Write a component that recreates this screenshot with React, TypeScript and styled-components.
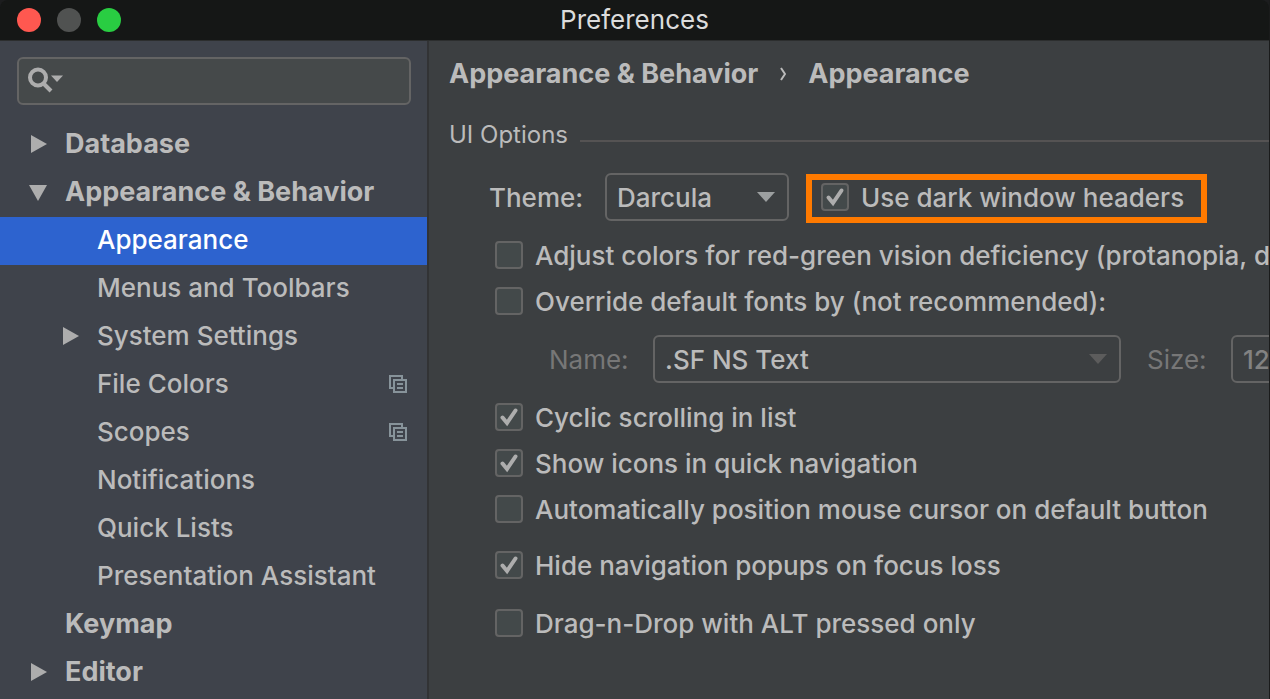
import React from "react";
import styled, { createGlobalStyle, css } from "styled-components";

const color = {
  header: "#151716",
  headerLine: "#2c2e2e",
  sidebar: "#3f434b",
  panel: "#3c3f41",
  field: "#45494a",
  line: "#646464",
  rule: "#555353",
  divider: "#323335",
  text: "#bbbbbb",
  dim: "#777777",
  icon: "#adadad",
  selected: "#2d63cf",
  highlight: "#ff7a00",
};

const GlobalStyle = createGlobalStyle`
  *, *::before, *::after { box-sizing: border-box; }
  html, body, #root { height: 100%; }
  body {
    margin: 0;
    overflow: hidden;
    background: #1c1d1e;
    color: ${color.text};
    font: 450 26px/32px Inter, "Liberation Sans", sans-serif;
  }
  button, input, select { font: inherit; color: inherit; }
`;

const Window = styled.div`
  display: flex;
  flex-direction: column;
  height: 100%;
  overflow: hidden;
  border-right: 1px solid #1a1b1b;
`;

const Header = styled.header`
  flex: none;
  display: grid;
  grid-template-columns: 1fr auto 1fr;
  align-items: center;
  height: 41px;
  padding: 0 17px;
  background: ${color.header};
  border-bottom: 1px solid ${color.headerLine};
  border-radius: 8px 8px 0 0;
`;

const Lights = styled.div`
  display: flex;
  gap: 16px;
`;

const Light = styled.button<{ $fill: string }>`
  width: 24px;
  height: 24px;
  padding: 0;
  border: 0;
  border-radius: 50%;
  background: ${(p) => p.$fill};
`;

const Title = styled.h1`
  margin: 0;
  color: #dcdcdc;
  font-size: 26px;
  font-weight: 400;
`;

const Body = styled.div`
  flex: 1;
  display: flex;
  min-height: 0;
`;

const Sidebar = styled.aside`
  flex: none;
  width: 429px;
  padding-top: 16px;
  overflow: hidden;
  background: ${color.sidebar};
  border-right: 2px solid ${color.divider};
`;

const SearchBox = styled.label`
  display: flex;
  align-items: center;
  gap: 8px;
  height: 48px;
  margin: 0 16px 16px 17px;
  padding: 0 8px 2px;
  background: ${color.field};
  border: 2px solid ${color.line};
  border-radius: 6px;
`;

const SearchInput = styled.input`
  flex: 1;
  min-width: 0;
  padding: 0;
  border: 0;
  outline: 0;
  background: none;
`;

const Tree = styled.ul`
  margin: 0;
  padding: 0;
  list-style: none;
`;

const TreeRow = styled.button<{ $level: number; $selected?: boolean }>`
  display: flex;
  align-items: center;
  gap: 18px;
  width: 100%;
  height: 48px;
  padding: 0 20px 2px ${(p) => (p.$level ? 61 : 29)}px;
  border: 0;
  background: none;
  text-align: left;
  font-size: ${(p) => (p.$level ? 26 : 27)}px;
  font-weight: ${(p) => (p.$level ? 450 : 700)};
  ${(p) =>
    p.$selected &&
    css`
      background: ${color.selected};
      color: #ffffff;
    `}
`;

const TreeLabel = styled.span`
  flex: 1;
  white-space: nowrap;
`;

const ArrowSlot = styled.span`
  flex: none;
  display: flex;
  width: 18px;
`;

const Main = styled.main`
  flex: 1;
  min-width: 0;
  padding-top: 17px;
  overflow: hidden;
  background: ${color.panel};
  white-space: nowrap;
`;

const Crumbs = styled.nav`
  display: flex;
  align-items: center;
  gap: 22px;
  padding-left: 20px;
  font-size: 27px;
  font-weight: 700;
`;

const Crumb = styled.a`
  color: inherit;
  text-decoration: none;
`;

const SectionTitle = styled.h2`
  display: flex;
  align-items: center;
  gap: 12px;
  margin: 29px 0 22px;
  padding-left: 20px;
  font-size: 24px;
  font-weight: 400;

  &::after {
    content: "";
    flex: 1;
    height: 2px;
    margin-top: 12px;
    background: ${color.rule};
  }
`;

const ThemeRow = styled.div`
  display: flex;
  height: 50px;
  margin-bottom: 9px;
  padding-left: 60px;
`;

const FontRow = styled.div`
  display: flex;
  align-items: center;
  height: 70px;
  padding-left: 120px;
`;

const FieldLabel = styled.label<{ $width: number; $dim?: boolean; $gap?: number }>`
  flex: none;
  width: ${(p) => p.$width}px;
  margin-left: ${(p) => p.$gap ?? 0}px;
  line-height: 50px;
  ${(p) =>
    p.$dim &&
    css`
      padding-top: 2px;
      color: ${color.dim};
      font-weight: 400;
    `}
`;

const SelectFrame = styled.div<{ $width: number }>`
  flex: none;
  display: grid;
  align-items: center;
  width: ${(p) => p.$width}px;
  height: 48px;

  > * { grid-area: 1 / 1; }
  > svg {
    justify-self: end;
    margin-right: 14px;
    pointer-events: none;
  }
`;

const SelectControl = styled.select<{ $dim?: boolean }>`
  appearance: none;
  width: 100%;
  height: 48px;
  padding: 2px 10px 0;
  background: none;
  border: 2px solid ${color.line};
  border-radius: 6px;
  color: ${(p) => (p.$dim ? "#828282" : color.text)};
  opacity: 1;
`;

const Highlight = styled.div`
  display: flex;
  align-items: center;
  align-self: flex-end;
  width: 401px;
  height: 49px;
  margin-left: 17px;
  padding: 0 9px 3px;
  border: 6px solid ${color.highlight};
`;

const CheckRow = styled.div<{ $before?: number }>`
  display: flex;
  align-items: center;
  height: 46px;
  margin-top: ${(p) => p.$before ?? 0}px;
  padding-left: 66px;
`;

const CheckLabel = styled.label`
  display: flex;
  align-items: center;
  gap: 12px;
`;

const CheckText = styled.span`
  padding-top: 2px;
`;

const CheckBox = styled.span`
  flex: none;
  display: grid;
  width: 28px;
  height: 28px;

  > * { grid-area: 1 / 1; }
  > svg { pointer-events: none; visibility: hidden; }
  > input:checked + svg { visibility: visible; }
`;

const CheckInput = styled.input`
  appearance: none;
  width: 28px;
  height: 28px;
  margin: 0;
  background: #43494a;
  border: 2px solid ${color.line};
  border-radius: 4px;
`;

function Check({ text, checked }: { text: string; checked?: boolean }) {
  return (
    <CheckLabel>
      <CheckBox>
        <CheckInput type="checkbox" defaultChecked={checked} />
        <svg width="28" height="28" viewBox="0 0 28 28" fill="none" aria-hidden="true">
          <path d="M7.5 14.5L12 20L20.5 7.5" stroke={color.icon} strokeWidth="4" strokeLinecap="round" />
        </svg>
      </CheckBox>
      <CheckText>{text}</CheckText>
    </CheckLabel>
  );
}

function DropArrow({ fill }: { fill: string }) {
  return (
    <svg width="18" height="10" viewBox="0 0 18 10" aria-hidden="true">
      <path d="M0 0H18L9 10Z" fill={fill} />
    </svg>
  );
}

function TreeArrow({ open }: { open: boolean }) {
  return (
    <svg width="18" height="18" viewBox="0 0 18 18" aria-hidden="true">
      <path d={open ? "M0 2H18L9 18Z" : "M2 0V18L18 9Z"} fill={color.icon} />
    </svg>
  );
}

function ProjectIcon() {
  return (
    <svg width="18" height="18" viewBox="0 0 18 18" fill="none" stroke="#87939a" strokeWidth="2" aria-hidden="true">
      <path d="M4 13H1V1H13V4" />
      <path d="M5 5H17V17H5Z" />
      <path d="M8 9H14M8 13H14" />
    </svg>
  );
}

function SearchIcon() {
  return (
    <svg width="36" height="26" viewBox="0 0 36 26" aria-hidden="true">
      <circle cx="11" cy="10.5" r="8" fill="none" stroke={color.icon} strokeWidth="4" />
      <path d="M16 16L24 24" stroke={color.icon} strokeWidth="4" />
      <path d="M24 8.5H36L30 15Z" fill={color.icon} />
    </svg>
  );
}

type Node = { label: string; level: number; open?: boolean; selected?: boolean; project?: boolean };

const nodes: Node[] = [
  { label: "Database", level: 0, open: false },
  { label: "Appearance & Behavior", level: 0, open: true },
  { label: "Appearance", level: 1, selected: true },
  { label: "Menus and Toolbars", level: 1 },
  { label: "System Settings", level: 1, open: false },
  { label: "File Colors", level: 1, project: true },
  { label: "Scopes", level: 1, project: true },
  { label: "Notifications", level: 1 },
  { label: "Quick Lists", level: 1 },
  { label: "Presentation Assistant", level: 1 },
  { label: "Keymap", level: 0 },
  { label: "Editor", level: 0, open: false },
];

export default function App() {
  return (
    <>
      <GlobalStyle />
      <Window>
        <Header>
          <Lights>
            <Light $fill="#ff5850" aria-label="Close" />
            <Light $fill="#505251" aria-label="Minimize" />
            <Light $fill="#29cd42" aria-label="Zoom" />
          </Lights>
          <Title>Preferences</Title>
        </Header>
        <Body>
          <Sidebar>
            <SearchBox>
              <SearchIcon />
              <SearchInput type="text" aria-label="Search settings" />
            </SearchBox>
            <Tree>
              {nodes.map((n) => (
                <li key={n.level + n.label}>
                  <TreeRow $level={n.level} $selected={n.selected} aria-expanded={n.open}>
                    <ArrowSlot>{n.open !== undefined && <TreeArrow open={n.open} />}</ArrowSlot>
                    <TreeLabel>{n.label}</TreeLabel>
                    {n.project && <ProjectIcon />}
                  </TreeRow>
                </li>
              ))}
            </Tree>
          </Sidebar>
          <Main>
            <Crumbs aria-label="Breadcrumb">
              <Crumb href="#behavior">Appearance &amp; Behavior</Crumb>
              <svg width="6" height="14" viewBox="0 0 6 14" fill="none" aria-hidden="true">
                <path d="M1 1L5 7L1 13" stroke={color.text} strokeWidth="2" />
              </svg>
              <Crumb href="#appearance">Appearance</Crumb>
            </Crumbs>
            <SectionTitle>UI Options</SectionTitle>
            <ThemeRow>
              <FieldLabel htmlFor="theme" $width={116}>Theme:</FieldLabel>
              <SelectFrame $width={184}>
                <SelectControl id="theme">
                  <option>Darcula</option>
                </SelectControl>
                <DropArrow fill="#9c9fa0" />
              </SelectFrame>
              <Highlight>
                <Check text="Use dark window headers" checked />
              </Highlight>
            </ThemeRow>
            <CheckRow>
              <Check text="Adjust colors for red-green vision deficiency (protanopia, d" />
            </CheckRow>
            <CheckRow>
              <Check text="Override default fonts by (not recommended):" />
            </CheckRow>
            <FontRow>
              <FieldLabel htmlFor="font-name" $width={104} $dim>Name:</FieldLabel>
              <SelectFrame $width={468}>
                <SelectControl id="font-name" disabled>
                  <option>.SF NS Text</option>
                </SelectControl>
                <DropArrow fill="#5c5c5c" />
              </SelectFrame>
              <FieldLabel htmlFor="font-size" $width={84} $gap={26} $dim>Size:</FieldLabel>
              <SelectFrame $width={120}>
                <SelectControl id="font-size" $dim disabled>
                  <option>12</option>
                </SelectControl>
                <DropArrow fill="#5c5c5c" />
              </SelectFrame>
            </FontRow>
            <CheckRow>
              <Check text="Cyclic scrolling in list" checked />
            </CheckRow>
            <CheckRow>
              <Check text="Show icons in quick navigation" checked />
            </CheckRow>
            <CheckRow>
              <Check text="Automatically position mouse cursor on default button" />
            </CheckRow>
            <CheckRow $before={10}>
              <Check text="Hide navigation popups on focus loss" checked />
            </CheckRow>
            <CheckRow $before={12}>
              <Check text="Drag-n-Drop with ALT pressed only" />
            </CheckRow>
          </Main>
        </Body>
      </Window>
    </>
  );
}
